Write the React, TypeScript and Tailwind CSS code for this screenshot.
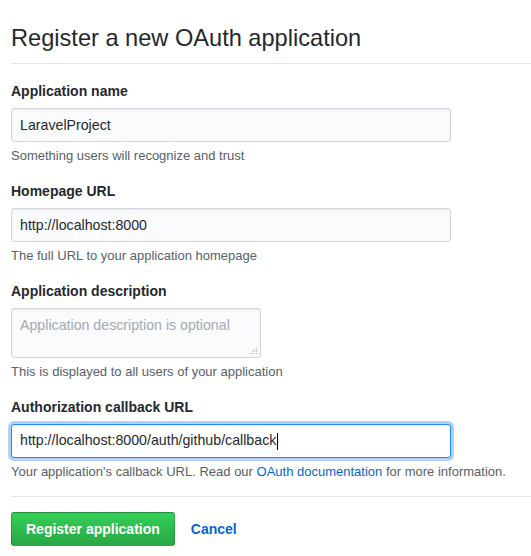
import React from "react";

const font = { fontFamily: '"Liberation Sans", Arial, sans-serif' };

function Label({ children }: { children: React.ReactNode }) {
  return <label className="block pt-[1px] text-[14px] font-bold leading-[21px] text-[#24292e]">{children}</label>;
}

function Note({ children }: { children: React.ReactNode }) {
  return <p className="mt-[5px] text-[13px] leading-[18px] text-[#586069]">{children}</p>;
}

function TextInput({ value }: { value: string }) {
  return (
    <input
      readOnly
      value={value}
      className="mt-[6px] block h-[34px] w-[440px] rounded-[3px] border border-[#d1d5da] bg-[#fafbfc] px-[8px] text-[14.2px] text-[#24292e] shadow-[inset_0_1px_2px_rgba(27,31,35,0.075)] outline-none"
    />
  );
}

export default function App() {
  return (
    <div className="min-h-screen bg-white pl-[11px]" style={font}>
      {/* Header */}
      <div className="border-b border-[#e1e4e8] pt-[20px] pb-[7px]">
        <h2 className="text-[23.6px] font-normal leading-[36px] text-[#24292e]">Register a new OAuth application</h2>
      </div>

      <form className="pt-[16px]">
        <div className="mb-[15px]">
          <Label>Application name</Label>
          <TextInput value="LaravelProject" />
          <Note>Something users will recognize and trust</Note>
        </div>

        <div className="mb-[15px]">
          <Label>Homepage URL</Label>
          <TextInput value="http://localhost:8000" />
          <Note>The full URL to your application homepage</Note>
        </div>

        <div className="mb-[15px]">
          <Label>Application description</Label>
          <div className="relative mt-[6px] w-[250px]">
            <textarea
              readOnly
              placeholder="Application description is optional"
              className="block h-[50px] w-[250px] resize-none rounded-[3px] border border-[#d1d5da] bg-[#fafbfc] px-[8px] py-[6px] text-[14.2px] leading-[20px] text-[#24292e] shadow-[inset_0_1px_2px_rgba(27,31,35,0.075)] outline-none placeholder:text-[#a3aab1]"
            />
            {/* resize grip */}
            <svg className="absolute right-[3px] bottom-[3px]" width="8" height="8" viewBox="0 0 8 8" fill="#b1b5b9">
              <rect x="6" y="0" width="1" height="1" />
              <rect x="4" y="2" width="1" height="1" />
              <rect x="6" y="2" width="1" height="1" />
              <rect x="2" y="4" width="1" height="1" />
              <rect x="4" y="4" width="1" height="1" />
              <rect x="6" y="4" width="1" height="1" />
              <rect x="0" y="6" width="1" height="1" />
              <rect x="2" y="6" width="1" height="1" />
              <rect x="4" y="6" width="1" height="1" />
              <rect x="6" y="6" width="1" height="1" />
            </svg>
          </div>
          <Note>This is displayed to all users of your application</Note>
        </div>

        <div>
          <Label>Authorization callback URL</Label>
          <div className="mt-[6px] flex h-[34px] w-[440px] items-center rounded-[3px] border border-[#2188ff] bg-white px-[8px] text-[14.2px] text-[#24292e] shadow-[inset_0_1px_2px_rgba(27,31,35,0.075),0_0_0_3px_rgba(3,102,214,0.3)]">
            <span>http://localhost:8000/auth/github/callback</span>
            <span className="ml-px h-[17px] w-px bg-black" />
          </div>
          <Note>
            Your application's callback URL. Read our{" "}
            <a href="#" className="text-[#0366d6]">
              OAuth documentation
            </a>{" "}
            for more information.
          </Note>
        </div>

        <div className="mt-[15px] flex items-center gap-[16px] border-t border-[#e1e4e8] pt-[15px]">
          <button
            type="button"
            className="h-[34px] rounded-[3px] border border-[rgba(27,31,35,0.2)] bg-gradient-to-b from-[#34d058] to-[#28a745] px-[14px] text-[14px] font-bold text-white"
          >
            Register application
          </button>
          <a href="#" className="text-[14px] font-bold text-[#0366d6]">
            Cancel
          </a>
        </div>
      </form>
    </div>
  );
}
